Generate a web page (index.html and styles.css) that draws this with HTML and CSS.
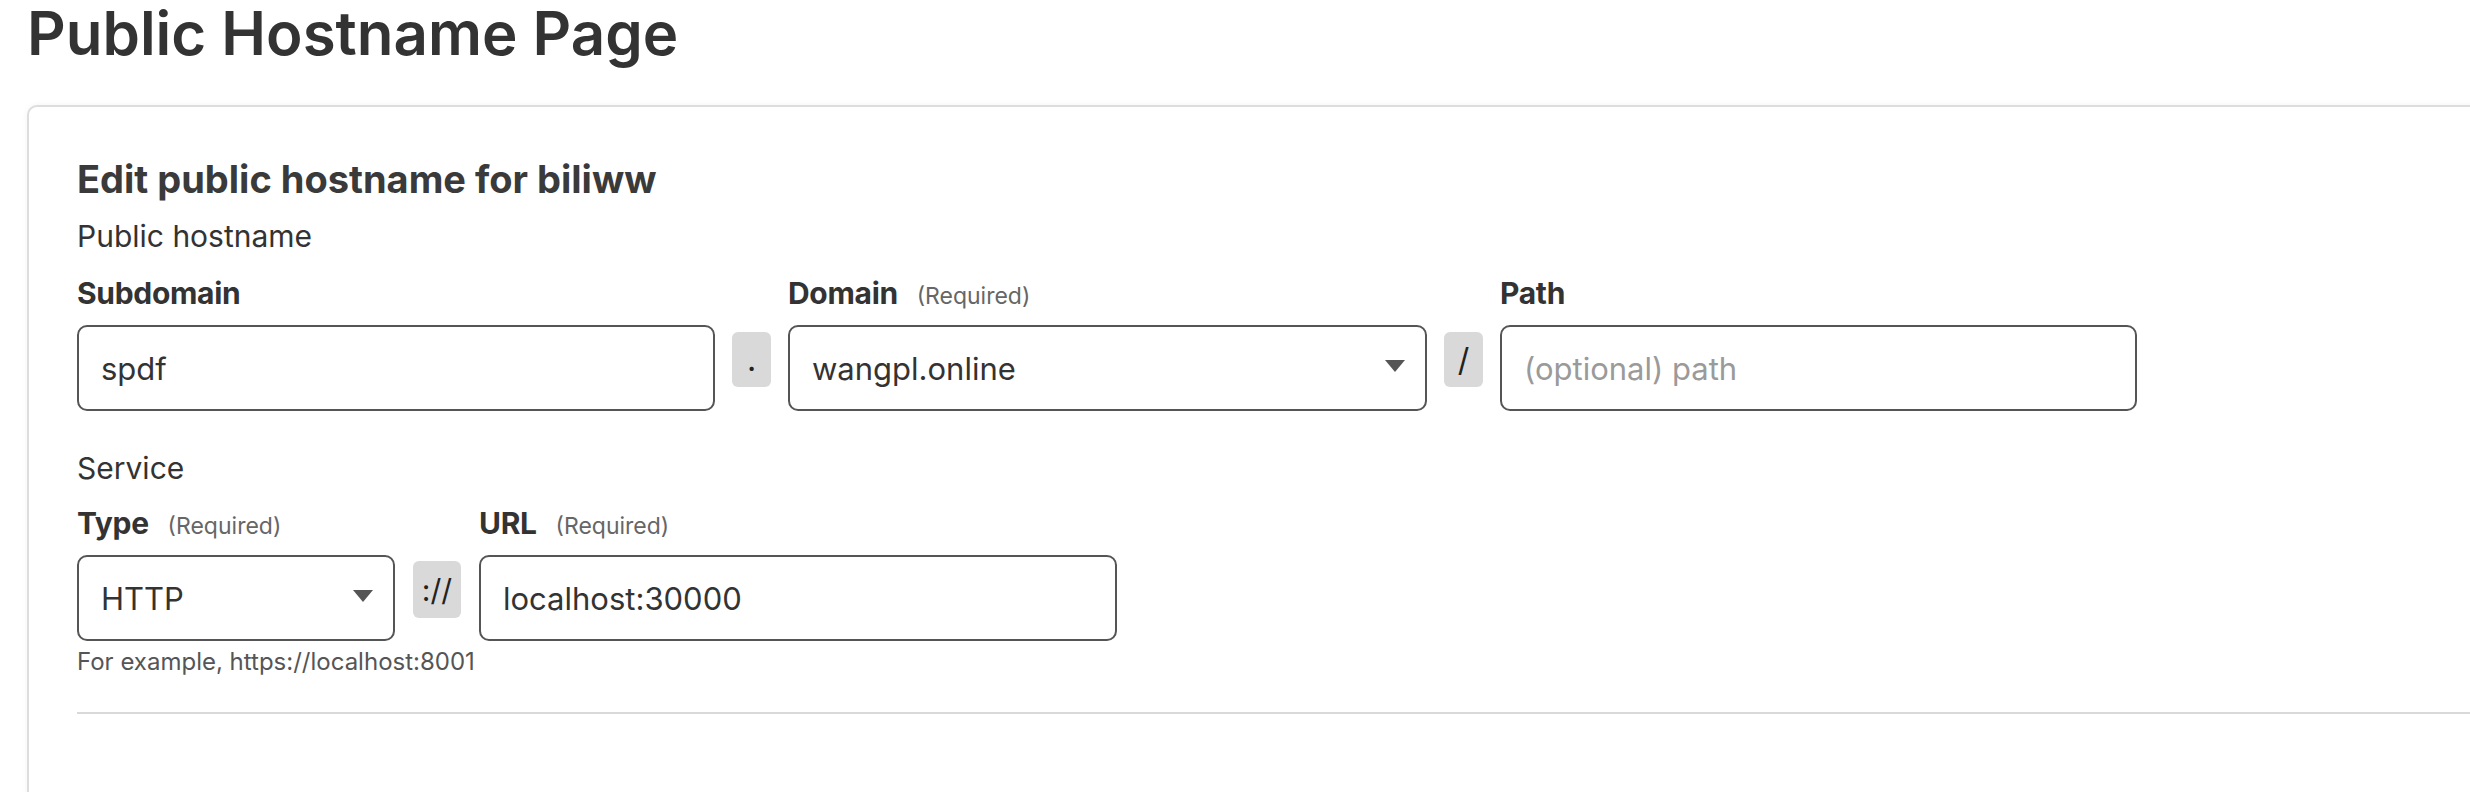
FILE: index.html
```html
<!DOCTYPE html>
<html lang="en">
<head>
<meta charset="utf-8">
<title>Public Hostname Page</title>
<link rel="stylesheet" href="styles.css">
</head>
<body>
<div class="page">
  <h1 class="page-title">Public Hostname Page</h1>
  <section class="card">
    <h2 class="card-title">Edit public hostname for biliww</h2>

    <div class="group-title">Public hostname</div>
    <div class="hostname-grid">
      <label class="field-label col-1">Subdomain</label>
      <label class="field-label col-3">Domain <span class="req">(Required)</span></label>
      <label class="field-label col-5">Path</label>

      <input class="text-input col-1 row-2" type="text" value="spdf">
      <div class="sep col-2 row-2">.</div>
      <div class="select col-3 row-2"><span>wangpl.online</span><span class="caret"></span></div>
      <div class="sep col-4 row-2">/</div>
      <input class="text-input col-5 row-2" type="text" placeholder="(optional) path">
    </div>

    <div class="group-title service-title">Service</div>
    <div class="service-grid">
      <label class="field-label col-1">Type <span class="req">(Required)</span></label>
      <label class="field-label col-3">URL <span class="req">(Required)</span></label>

      <div class="select col-1 row-2"><span>HTTP</span><span class="caret"></span></div>
      <div class="sep sep-wide col-2 row-2">://</div>
      <input class="text-input col-3 row-2" type="text" value="localhost:30000">

      <div class="hint">For example, https://localhost:8001</div>
    </div>

    <hr class="divider">
  </section>
</div>
</body>
</html>
```
FILE: styles.css
```css
html, body {
  margin: 0;
  padding: 0;
  background: #ffffff;
}

body {
  font-family: Inter, "Noto Sans", "Liberation Sans", sans-serif;
  color: #333333;
  overflow: hidden;
}

.page {
  padding-left: 27px;
}

.page-title {
  margin: 0;
  font-size: 60px;
  line-height: 66px;
  font-weight: 600;
  color: #333333;
}

.card {
  margin-top: 39px;
  margin-right: -60px;
  min-height: 760px;
  border: 2px solid #dddddd;
  border-radius: 10px;
  background: #ffffff;
  box-shadow: 0 0 6px rgba(0, 0, 0, 0.05);
  padding: 49px 0 0 48px;
}

.card-title {
  margin: 0;
  font-size: 38px;
  line-height: 46px;
  font-weight: 700;
  color: #3a3a3a;
}

.group-title {
  margin-top: 14px;
  font-size: 30px;
  line-height: 40px;
  color: #333333;
}

.service-title {
  margin-top: 37px;
}

.hostname-grid {
  display: grid;
  grid-template-columns: 638px 39px 639px 39px 637px;
  column-gap: 17px;
  margin-top: 19px;
}

.service-grid {
  display: grid;
  grid-template-columns: 318px 48px 638px;
  column-gap: 18px;
  margin-top: 17px;
}

.col-1 { grid-column: 1; }
.col-2 { grid-column: 2; }
.col-3 { grid-column: 3; }
.col-4 { grid-column: 4; }
.col-5 { grid-column: 5; }
.row-2 { grid-row: 2; }

.field-label {
  grid-row: 1;
  font-size: 30px;
  line-height: 36px;
  font-weight: 700;
  color: #333333;
  margin-bottom: 11px;
  letter-spacing: -0.3px;
  white-space: nowrap;
}

.req {
  margin-left: 12px;
  font-size: 23px;
  font-weight: 400;
  color: #666666;
  letter-spacing: 0;
}

.text-input,
.select {
  box-sizing: border-box;
  height: 86px;
  border: 2px solid #555555;
  border-radius: 10px;
  background: #ffffff;
  font-family: Inter, "Noto Sans", "Liberation Sans", sans-serif;
  font-size: 31px;
  color: #333333;
  padding: 0 22px;
  margin: 0;
  width: 100%;
  outline: none;
}

.text-input::placeholder {
  color: #9a9a9a;
}

.select {
  display: flex;
  align-items: center;
  justify-content: space-between;
  padding-right: 20px;
}

.caret {
  width: 0;
  height: 0;
  border-left: 10px solid transparent;
  border-right: 10px solid transparent;
  border-top: 12px solid #555555;
  margin-top: -4px;
}

.sep {
  align-self: start;
  margin-top: 7px;
  height: 55px;
  border-radius: 6px;
  background: #d9d9d9;
  display: flex;
  align-items: center;
  justify-content: center;
  font-size: 32px;
  color: #222222;
}

.sep-wide {
  height: 57px;
  margin-top: 6px;
  font-size: 30px;
}

.hint {
  grid-column: 1 / 4;
  grid-row: 3;
  margin-top: 6px;
  font-size: 24px;
  line-height: 30px;
  color: #555555;
}

.divider {
  margin: 35px 0 0 0;
  border: none;
  height: 2px;
  background: #d9d9d9;
}
```
